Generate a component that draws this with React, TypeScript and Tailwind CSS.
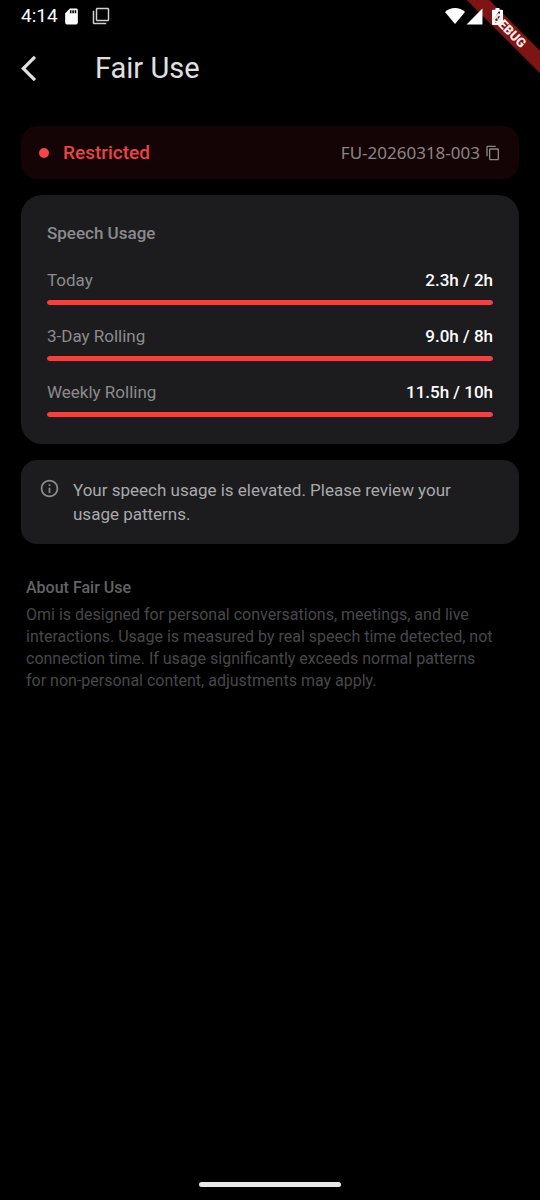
import React from 'react';
import {
    MdArrowBackIos,
    MdContentCopy,
    MdFilterNone,
    MdInfoOutline,
    MdSdCard,
    MdSignalCellular4Bar,
} from 'react-icons/md';

interface UsageItem {
    id: string;
    label: string;
    used: number;
    limit: number;
}

const USAGE: UsageItem[] = [
    { id: 'today', label: 'Today', used: 2.3, limit: 2 },
    { id: 'three-day', label: '3-Day Rolling', used: 9, limit: 8 },
    { id: 'weekly', label: 'Weekly Rolling', used: 11.5, limit: 10 },
];

const CASE_ID = 'FU-20260318-003';

// The band sits under the status icons, its label over them.
const DebugRibbon: React.FC = () => (
    <>
        <div className="pointer-events-none absolute top-0 right-0 h-20 w-20 overflow-hidden">
            <div className="absolute top-[23px] left-[-11px] h-4 w-[120px] rotate-45 bg-[#7d1416]" />
        </div>
        <div className="pointer-events-none absolute top-0 right-0 z-10 h-20 w-20 overflow-hidden">
            <div className="absolute top-[23px] left-[-11px] flex h-4 w-[120px] rotate-45 items-center justify-center text-[13px] leading-4 font-black text-[#f5e9e9]">
                DEBUG
            </div>
        </div>
    </>
);

const StatusBar: React.FC = () => (
    <div className="relative flex h-8 items-center justify-between pr-[37px] pl-[21px] text-white">
        <div className="flex items-center">
            <span className="text-[19px] leading-6">4:14</span>
            <MdSdCard size={19} className="ml-1" />
            <MdFilterNone size={18} className="ml-[11px] text-[#d0d0d0]" />
        </div>
        <div className="flex items-center">
            <svg width="20" height="16" viewBox="0 0 20 16" fill="currentColor" aria-hidden="true">
                <path d="M0 4C2.8 1.4 6.2 0 10 0s7.200 1.400 10 4L10 16z" />
            </svg>
            <MdSignalCellular4Bar size={19} />
            <svg className="ml-2" width="11" height="17" viewBox="0 0 11 17" aria-hidden="true">
                <path d="M3.500 0h4v1.800H10a1 1 0 0 1 1 1V16a1 1 0 0 1-1 1H1a1 1 0 0 1-1-1V2.800a1 1 0 0 1 1-1h2.500z" fill="#fff" />
                <path d="M6.500 3.500 3 9.500v5.500h1.500L8 8.500V3.500z" fill="#3a2020" />
                <path d="M6.500 6 4.500 10h1.500v3" fill="none" stroke="#fff" strokeWidth="0.800" />
            </svg>
        </div>
    </div>
);

const UsageRow: React.FC<{ item: UsageItem }> = ({ item }) => {
    const percent = Math.min(100, (item.used / item.limit) * 100);

    return (
        <li>
            <div className="flex items-center justify-between text-[17px] leading-5">
                <span id={`${item.id}-label`} className="text-[#8b8b8e]">{item.label}</span>
                <span className="font-medium text-white">{item.used.toFixed(1)}h / {item.limit}h</span>
            </div>
            <div
                role="progressbar"
                aria-labelledby={`${item.id}-label`}
                aria-valuenow={percent}
                className="mt-[10px] h-[5px] overflow-hidden rounded-full bg-[#2c2c2e]"
            >
                <div className="h-full rounded-full bg-[#e84545]" style={{ width: `${percent}%` }} />
            </div>
        </li>
    );
};

export default function App() {
    return (
        <div className="relative flex min-h-screen flex-col bg-black font-['Roboto',sans-serif]">
            <DebugRibbon />
            <StatusBar />

            <header className="flex h-[72px] items-center pl-[21px]">
                <button type="button" aria-label="Back" className="w-[74px] text-[#e0e0e0]">
                    <MdArrowBackIos size={31} />
                </button>
                <h1 className="text-[29px] leading-9 text-[#e0e0e0]">Fair Use</h1>
            </header>

            <main className="flex flex-1 flex-col gap-4 px-[21px] pt-[22px]">
                <section className="flex h-[53px] items-center rounded-2xl bg-[#140405] px-[18px]">
                    <span className="h-[10px] w-[10px] rounded-full bg-[#f04848]" />
                    <span className="ml-[14px] text-[19px] leading-6 font-medium text-[#e84545]">Restricted</span>
                    <button
                        type="button"
                        aria-label={`Copy ${CASE_ID}`}
                        className="ml-auto flex items-center gap-[5px] text-[#8c8486]"
                    >
                        <span className="font-['Noto_Sans',sans-serif] text-[17px] leading-5">{CASE_ID}</span>
                        <MdContentCopy size={16} />
                    </button>
                </section>

                <section className="rounded-[21px] bg-[#1c1c1e] px-[26px] pt-[26px] pb-[27px]">
                    <h2 className="text-[17px] leading-6 font-medium text-[#8b8b8e]">Speech Usage</h2>
                    <ul className="mt-[25px] flex flex-col gap-[21px]">
                        {USAGE.map((item) => (
                            <UsageRow key={item.id} item={item} />
                        ))}
                    </ul>
                </section>

                <section className="flex items-start gap-[13px] rounded-2xl bg-[#1c1c1e] p-[18px] text-[#a9a9ab]">
                    <MdInfoOutline size={21} className="shrink-0 text-[#8b8b8e]" />
                    <p className="text-[17px] leading-6">
                        Your speech usage is elevated. Please review your
                        <br />
                        usage patterns.
                    </p>
                </section>

                <section className="mt-4 px-[5px]">
                    <h2 className="text-base leading-6 font-medium text-[#636366]">About Fair Use</h2>
                    <p className="mt-1 text-base leading-[22px] text-[#48484a]">
                        Omi is designed for personal conversations, meetings, and live
                        <br />
                        interactions. Usage is measured by real speech time detected, not
                        <br />
                        connection time. If usage significantly exceeds normal patterns
                        <br />
                        for non-personal content, adjustments may apply.
                    </p>
                </section>
            </main>

            <div className="mb-[13px] h-[5px] w-[142px] self-center rounded-full bg-[#e8e8e8]" />
        </div>
    );
}
